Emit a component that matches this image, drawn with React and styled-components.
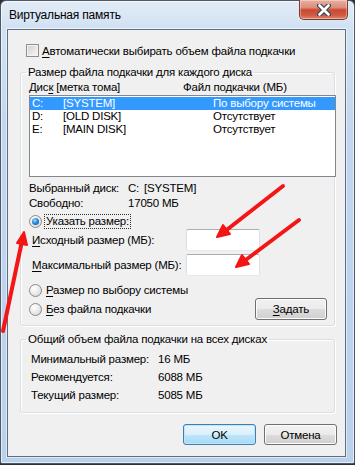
import React from 'react'
import styled, { createGlobalStyle } from 'styled-components'

const GlobalStyle = createGlobalStyle`
  html, body { margin: 0; padding: 0; }
  body {
    background: #2e3135;
    font-family: "Liberation Sans", Arial, sans-serif;
    font-size: 11.5px;
    letter-spacing: -0.2px;
    color: #000;
  }
`

export default function App() {
    return (
        <>
            <GlobalStyle />
            <Window>
                <TitleBar>
                    <Title>Виртуальная память</Title>
                    <CloseButton>
                        <svg width="16" height="12" viewBox="0 0 16 12">
                            <path d="M3.5 1.5 L12.5 10.5 M12.5 1.5 L3.5 10.5" stroke="#3b4658" strokeWidth="5" strokeLinecap="round" fill="none" />
                            <path d="M3.5 1.5 L12.5 10.5 M12.5 1.5 L3.5 10.5" stroke="#fff" strokeWidth="2.6" strokeLinecap="round" fill="none" />
                        </svg>
                    </CloseButton>
                </TitleBar>
                <Client>
                    <CheckRow>
                        <CheckBox />
                        <span><Key>А</Key>втоматически выбирать объем файла подкачки</span>
                    </CheckRow>

                    <Group $top={6} $left={8} $bottom={5}>
                        <Legend $shift={-3}>Размер файла подкачки для каждого диска</Legend>
                        <ColumnHeads>
                            <span>Дис<Key>к</Key> [метка тома]</span>
                            <span>Файл подкачки (МБ)</span>
                        </ColumnHeads>
                        <ListBox>
                            <ListRow $selected>
                                <span>C:</span><span>[SYSTEM]</span><span>По выбору системы</span>
                            </ListRow>
                            <ListRow>
                                <span>D:</span><span>[OLD DISK]</span><span>Отсутствует</span>
                            </ListRow>
                            <ListRow>
                                <span>E:</span><span>[MAIN DISK]</span><span>Отсутствует</span>
                            </ListRow>
                        </ListBox>
                        <InfoGrid $label={99} $row={15} $top={3}>
                            <span>Выбранный диск:</span>
                            <DiskName><span>C:</span><span>[SYSTEM]</span></DiskName>
                            <span>Свободно:</span>
                            <span>17050 МБ</span>
                        </InfoGrid>
                        <RadioRow $top={4}>
                            <Radio $checked />
                            <RadioLabel $focused>Указать размер:</RadioLabel>
                        </RadioRow>
                        <SizeRow $top={0}>
                            <span><Key>И</Key>сходный размер (МБ):</span>
                            <TextBox />
                        </SizeRow>
                        <SizeRow $top={3}>
                            <span><Key>М</Key>аксимальный размер (МБ):</span>
                            <TextBox />
                        </SizeRow>
                        <RadioRow $top={7}>
                            <Radio />
                            <RadioLabel><Key>Р</Key>азмер по выбору системы</RadioLabel>
                        </RadioRow>
                        <ActionRow>
                            <RadioRow $top={0}>
                                <Radio />
                                <RadioLabel><Key>Б</Key>ез файла подкачки</RadioLabel>
                            </RadioRow>
                            <Button $w={72} $h={22}><Key>З</Key>адать</Button>
                        </ActionRow>
                    </Group>

                    <Group $top={5} $left={10} $bottom={8}>
                        <Legend $shift={-5}>Общий объем файла подкачки на всех дисках</Legend>
                        <InfoGrid $label={127} $row={18} $top={3}>
                            <span>Минимальный размер:</span>
                            <span>16 МБ</span>
                            <span>Рекомендуется:</span>
                            <span>6088 МБ</span>
                            <span>Текущий размер:</span>
                            <span>5085 МБ</span>
                        </InfoGrid>
                    </Group>

                    <Footer>
                        <Button $w={73} $h={21} $default>OK</Button>
                        <Button $w={73} $h={21}>Отмена</Button>
                    </Footer>
                </Client>
                <Arrows width="355" height="465" viewBox="0 0 355 465">
                    <g stroke="#f41515" strokeWidth="4" strokeLinecap="round" fill="#f41515">
                        <line x1="283" y1="186" x2="224" y2="232" />
                        <polygon points="217,237 230,234 223,225" strokeWidth="2" strokeLinejoin="round" />
                        <line x1="299" y1="220" x2="243" y2="262" />
                        <polygon points="236,267 249,264 242,255" strokeWidth="2" strokeLinejoin="round" />
                        <line x1="3" y1="331" x2="22" y2="241" />
                        <polygon points="24,232 27,245 17,243" strokeWidth="2" strokeLinejoin="round" />
                    </g>
                </Arrows>
            </Window>
        </>
    )
}

const Window = styled.div`
    position: relative;
    box-sizing: border-box;
    width: 355px;
    height: 464px;
    display: flex;
    flex-direction: column;
    padding: 0 8px 6px 6px;
    border: 1px solid #4d5868;
    border-radius: 6px 6px 2px 2px;
    background: linear-gradient(180deg, #e3ecf6 0px, #d2e2f3 26px, #c2d7ef 120px, #bad1ec 100%);
    box-shadow: inset 0 0 0 1px rgba(255,255,255,0.6);
    white-space: nowrap;`
const TitleBar = styled.div`
    height: 28px;
    display: flex;
    align-items: flex-start;
    justify-content: space-between;
    padding-left: 2px;`
const Title = styled.div`
    line-height: 28px;
    font-size: 12px;
    color: #000;`
const CloseButton = styled.div`
    box-sizing: border-box;
    width: 49px;
    height: 20px;
    margin: -1px -2px 0 0;
    display: flex;
    align-items: center;
    justify-content: center;
    border: 1px solid #7a3b33;
    border-top: none;
    border-radius: 0 0 5px 5px;
    background: linear-gradient(180deg, #eab0a2 0%, #dc8d79 40%, #c94a33 52%, #cf5a3f 80%, #de8a6d 100%);
    box-shadow: inset 0 0 0 1px rgba(255,255,255,0.35);`
const Client = styled.div`
    flex: 1;
    display: flex;
    flex-direction: column;
    padding: 13px 0 11px 0;
    border: 1px solid #5f6f83;
    background: #f0f0f0;
    box-shadow: 0 0 0 1px rgba(255,255,255,0.5);`
const Key = styled.span`
    text-decoration: underline;
    text-underline-offset: 2px;`
const CheckRow = styled.label`
    display: flex;
    align-items: center;
    gap: 3px;
    height: 15px;
    margin-left: 18px;`
const CheckBox = styled.span`
    box-sizing: border-box;
    width: 13px;
    height: 13px;
    border: 1px solid #8f8f8f;
    background: linear-gradient(135deg, #cfcfcf 0%, #e9e9e9 60%, #f7f7f7 100%);
    box-shadow: inset 0 0 0 1px #f4f4f4;`
const Group = styled.fieldset`
    margin: ${p => p.$top}px 10px 0 12px;
    padding: 0 0 ${p => p.$bottom}px ${p => p.$left}px;
    min-width: 0;
    border: 1px solid #d5dfe5;
    border-radius: 3px;
    box-shadow: inset 1px 1px 0 #fff, 1px 1px 0 #fff;`
const Legend = styled.legend`
    margin-left: ${p => p.$shift}px;
    padding: 0 2px;
    height: 16px;
    line-height: 16px;`
const ColumnHeads = styled.div`
    display: grid;
    grid-template-columns: 154px 1fr;
    height: 15px;
    line-height: 15px;`
const ListBox = styled.div`
    box-sizing: border-box;
    height: 82px;
    margin-right: -2px;
    padding-top: 1px;
    border: 1px solid #828790;
    background: #fff;`
const ListRow = styled.div`
    display: grid;
    grid-template-columns: 31px 150px 1fr;
    height: 13px;
    line-height: 13px;
    padding-left: 2px;
    background: ${p => p.$selected ? '#3399ff' : 'transparent'};
    color: ${p => p.$selected ? '#fff' : '#000'};`
const InfoGrid = styled.div`
    display: grid;
    grid-template-columns: ${p => p.$label}px 1fr;
    grid-auto-rows: ${p => p.$row}px;
    align-items: center;
    margin-top: ${p => p.$top}px;`
const DiskName = styled.span`
    display: flex;
    gap: 5px;`
const RadioRow = styled.div`
    display: flex;
    align-items: center;
    gap: 2px;
    height: 15px;
    margin-top: ${p => p.$top}px;`
const Radio = styled.span`
    box-sizing: border-box;
    position: relative;
    width: 13px;
    height: 13px;
    border-radius: 50%;
    border: 1px solid #8a8a8a;
    background: radial-gradient(circle at 35% 30%, #ffffff 0%, #f0f0f0 40%, #cfcfcf 100%);
    &::after {
        content: '';
        display: ${p => p.$checked ? 'block' : 'none'};
        position: absolute;
        left: 2px;
        top: 2px;
        width: 7px;
        height: 7px;
        border-radius: 50%;
        background: radial-gradient(circle at 40% 35%, #a6dcff 0%, #2a8ad8 45%, #0d4a8c 100%);
    }`
const RadioLabel = styled.span`
    padding: 0 1px;
    line-height: 13px;
    border: 1px dotted ${p => p.$focused ? '#333' : 'transparent'};`
const SizeRow = styled.div`
    display: grid;
    grid-template-columns: 154px 74px;
    align-items: center;
    height: 22px;
    margin-top: ${p => p.$top}px;
    padding-left: 3px;`
const TextBox = styled.span`
    box-sizing: border-box;
    height: 22px;
    border: 1px solid #dbdfe6;
    border-top-color: #abadb3;
    border-bottom-color: #e3e9ef;
    border-radius: 2px;
    background: #fff;`
const ActionRow = styled.div`
    display: flex;
    align-items: center;
    justify-content: space-between;
    height: 22px;
    padding-right: 7px;`
const Button = styled.button`
    box-sizing: border-box;
    width: ${p => p.$w}px;
    height: ${p => p.$h}px;
    padding: 0;
    font: inherit;
    letter-spacing: inherit;
    color: #000;
    border: 1px solid ${p => p.$default ? '#3c7fb1' : '#707070'};
    border-radius: 3px;
    background: ${p => p.$default
        ? 'linear-gradient(180deg, #eaf6fd 0%, #d9f0fc 50%, #bee6fd 50%, #a7d9f5 100%)'
        : 'linear-gradient(180deg, #f2f2f2 0%, #ebebeb 50%, #dddddd 50%, #cfcfcf 100%)'};
    box-shadow: inset 0 0 0 1px ${p => p.$default ? '#c4e5f6' : '#fcfcfc'};`
const Footer = styled.div`
    display: flex;
    justify-content: flex-end;
    gap: 8px;
    margin-top: 11px;
    padding-right: 8px;`
const Arrows = styled.svg`
    position: absolute;
    left: -1px;
    top: -1px;
    pointer-events: none;`
